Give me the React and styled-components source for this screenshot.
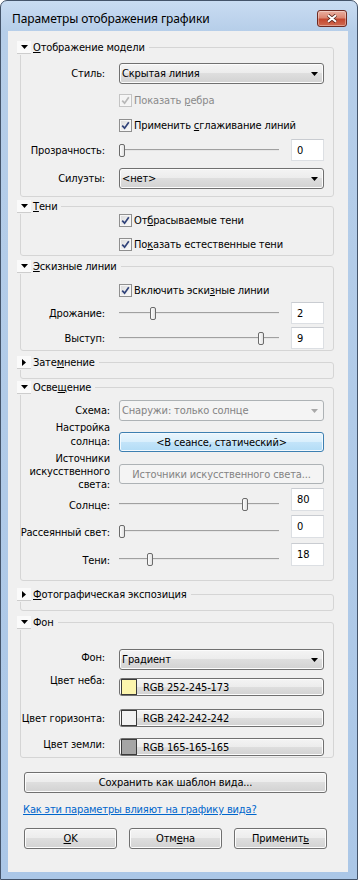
import React from 'react'
import styled, { createGlobalStyle } from 'styled-components'

const FONT = `"DejaVu Sans Condensed", "Liberation Sans", Arial, sans-serif`

const GlobalStyle = createGlobalStyle`
  * { box-sizing: border-box; }
  html, body { margin: 0; padding: 0; background: #ffffff; }
  body { font-family: ${FONT}; font-size: 11px; letter-spacing: -0.15px; color: #000; }
`

const Window = styled.div`
  width: 358px;
  height: 880px;
  display: flex;
  flex-direction: column;
  border: 1px solid #44546a;
  border-radius: 7px 7px 0 0;
  background: linear-gradient(180deg, #c9dcf2 0, #b6cee9 30px, #abc7e7 100%);
  overflow: hidden;
`

const TitleBar = styled.div`
  height: 30px;
  flex: none;
  display: flex;
  align-items: flex-start;
  justify-content: space-between;
  padding: 0 10px 0 11px;
`

const TitleText = styled.div`
  margin-top: 10px;
  font-family: "Noto Sans", "Open Sans", sans-serif;
  font-size: 12px;
  letter-spacing: -0.1px;
  line-height: 16px;
`

const CloseButton = styled.div`
  margin-top: 9px;
  width: 30px;
  height: 17px;
  border: 1px solid #6f2a22;
  border-radius: 3px;
  background: linear-gradient(180deg, #eab0a2 0%, #dc8672 45%, #c4472f 55%, #cf6b52 100%);
  box-shadow: inset 0 0 0 1px rgba(255, 255, 255, 0.35);
  display: flex;
  align-items: center;
  justify-content: center;
`

const Client = styled.div`
  flex: 1;
  margin: 0 9px 7px 7px;
  background: #f0f0f0;
  padding: 9px 14px 0 12px;
  display: flex;
  flex-direction: column;
`

const Group = styled.fieldset`
  margin: ${p => p.$mt || 0}px 0 0;
  padding: 0 9px ${p => p.$pb || 0}px 0;
  border: 1px solid #d5d5d5;
  border-radius: 3px;
  min-width: 0;
  min-inline-size: 0;
  display: flex;
  flex-direction: column;
`

const Legend = styled.legend`
  margin-left: -4px;
  padding: 0 4px 0 0;
  height: 15px;
  line-height: 15px;
  display: flex;
  align-items: center;
  gap: 2px;
`

const Expander = styled.span`
  width: 14px;
  height: 13px;
  background: #fafafa;
  border-bottom: 1px solid #cdcdcd;
  display: flex;
  align-items: center;
  justify-content: center;
`

const Key = styled.span`
  text-decoration: underline;
`

const Row = styled.div`
  display: grid;
  grid-template-columns: ${p => p.$labelW || 84}px 1fr;
  column-gap: ${p => p.$gap || 14}px;
  align-items: ${p => p.$align || 'center'};
  margin-top: ${p => p.$mt || 0}px;
  ${p => (p.$h ? `height: ${p.$h}px;` : '')}
`

const Label = styled.div`
  display: flex;
  justify-content: flex-end;
  text-align: right;
  white-space: nowrap;
  line-height: ${p => p.$lh || 13}px;
  margin-top: ${p => p.$mt || 0}px;
  margin-bottom: ${p => p.$mb || 0}px;
`

const ComboBox = styled.div`
  height: 21px;
  display: flex;
  align-items: center;
  justify-content: space-between;
  padding: 0 5px 0 2px;
  border: 1px solid ${p => (p.$disabled ? '#adb2b5' : '#707070')};
  border-radius: 3px;
  background: ${p =>
    p.$disabled
      ? '#f4f4f4'
      : 'linear-gradient(180deg, #f4f4f4 0%, #ececec 49%, #dedede 50%, #d2d2d2 100%)'};
  box-shadow: inset 0 0 0 1px ${p => (p.$disabled ? '#f4f4f4' : '#fcfcfc')};
  color: ${p => (p.$disabled ? '#838383' : '#000')};
`

const CheckLine = styled.div`
  display: flex;
  align-items: center;
  gap: 2px;
  height: 13px;
  line-height: 13px;
  color: ${p => (p.$disabled ? '#8a8a8a' : '#000')};
`

const Box = styled.span`
  width: 13px;
  height: 13px;
  flex: none;
  border: 1px solid ${p => (p.$disabled ? '#c4c4c4' : '#8f8f8f')};
  background: ${p => (p.$disabled ? '#f4f4f4' : 'linear-gradient(135deg, #dadada, #fdfdfd)')};
  box-shadow: inset 0 0 0 1px #f6f6f6;
  display: flex;
  align-items: center;
  justify-content: center;
`

const SliderField = styled.div`
  display: flex;
  align-items: ${p => p.$align || 'center'};
  gap: 12px;
`

const Track = styled.div`
  position: relative;
  width: 160px;
  height: 13px;
  flex: none;

  &::before {
    content: '';
    position: absolute;
    left: 0;
    right: 0;
    top: 5px;
    height: 1px;
    background: #a0a0a0;
    border-bottom: 1px solid #e6e6e6;
    box-sizing: content-box;
  }
`

const Thumb = styled.span`
  position: absolute;
  top: 0;
  width: 6px;
  height: 13px;
  border: 1px solid #6b6b6b;
  border-radius: 2px;
  background: linear-gradient(90deg, #fdfdfd, #e2e2e2);
`

const TextBox = styled.div`
  width: 33px;
  height: ${p => p.$h || 22}px;
  flex: none;
  border: 1px solid #dcdfe3;
  border-top-color: #c9ccd1;
  background: #fff;
  padding-left: 5px;
  display: flex;
  align-items: center;
  line-height: 13px;
`

const PushButton = styled.div`
  height: ${p => p.$h || 21}px;
  width: ${p => (p.$w ? `${p.$w}px` : 'auto')};
  flex: none;
  display: flex;
  align-items: center;
  justify-content: ${p => (p.$left ? 'flex-start' : 'center')};
  gap: ${p => (p.$left ? 6 : 0)}px;
  padding-left: ${p => (p.$left ? 1 : 0)}px;
  margin-top: ${p => p.$mt || 0}px;
  margin-left: ${p => p.$ml || 0}px;
  border: 1px solid #707070;
  border-radius: 3px;
  background: linear-gradient(180deg, #f4f4f4 0%, #ececec 49%, #dedede 50%, #d2d2d2 100%);
  box-shadow: inset 0 0 0 1px #fcfcfc;
  white-space: nowrap;

  ${p =>
    p.$variant === 'hot' &&
    `
    border-color: #3c7fb1;
    background: linear-gradient(180deg, #e9f5fd 0%, #d9effc 49%, #c3e4f9 50%, #b2dcf6 100%);
    box-shadow: inset 0 0 0 1px #f2f9fe;
  `}

  ${p =>
    p.$variant === 'disabled' &&
    `
    border-color: #adb2b5;
    background: #f4f4f4;
    box-shadow: none;
    color: #838383;
  `}
`

const Swatch = styled.span`
  width: 16px;
  height: 16px;
  flex: none;
  border: 1px solid #3a3a3a;
  background: ${p => p.$color};
`

const HelpLink = styled.div`
  margin: 10px 0 0 3px;
  line-height: 14px;
  color: #0066cc;
  text-decoration: underline;
`

const Footer = styled.div`
  display: flex;
  gap: 12px;
  margin-top: 11px;
  padding-left: 4px;
`

const DownArrow = ({ color = '#000' }) => (
  <svg width="7" height="4" viewBox="0 0 7 4">
    <polygon points="0,0 7,0 3.5,4" fill={color} />
  </svg>
)

const RightArrow = () => (
  <svg width="4" height="7" viewBox="0 0 4 7">
    <polygon points="0,0 4,3.5 0,7" fill="#000" />
  </svg>
)

const CheckMark = ({ disabled }) => (
  <svg width="9" height="9" viewBox="0 0 9 9">
    <polyline
      points="1.2,4.6 3.6,7.2 7.8,1.3"
      fill="none"
      stroke={disabled ? '#b8b8b8' : '#31437a'}
      strokeWidth="1.7"
    />
  </svg>
)

const GroupHeader = ({ open, children }) => (
  <Legend>
    <Expander>{open ? <DownArrow /> : <RightArrow />}</Expander>
    <span>{children}</span>
  </Legend>
)

const Combo = ({ value, disabled }) => (
  <ComboBox $disabled={disabled}>
    <span>{value}</span>
    <DownArrow color={disabled ? '#a8a8a8' : '#000'} />
  </ComboBox>
)

const Check = ({ disabled, children }) => (
  <CheckLine $disabled={disabled}>
    <Box $disabled={disabled}>
      <CheckMark disabled={disabled} />
    </Box>
    <span>{children}</span>
  </CheckLine>
)

const Slider = ({ value, max, align, h }) => (
  <SliderField $align={align}>
    <Track>
      <Thumb style={{ left: `${(value / max) * 154}px` }} />
    </Track>
    <TextBox $h={h}>{value}</TextBox>
  </SliderField>
)

const ColorButton = ({ color, rgb }) => (
  <PushButton $left $h={18}>
    <Swatch $color={color} />
    <span>RGB {rgb}</span>
  </PushButton>
)

export default function App() {
  return (
    <>
      <GlobalStyle />
      <Window>
        <TitleBar>
          <TitleText>Параметры отображения графики</TitleText>
          <CloseButton>
            <svg width="12" height="9" viewBox="0 0 12 9">
              <path d="M2 1.2 L10 7.8 M10 1.2 L2 7.8" stroke="#5b2820" strokeWidth="3.6" />
              <path d="M2 1.2 L10 7.8 M10 1.2 L2 7.8" stroke="#ffffff" strokeWidth="2" />
            </svg>
          </CloseButton>
        </TitleBar>

        <Client>
          <Group $pb={7}>
            <GroupHeader open>
              <Key>О</Key>тображение модели
            </GroupHeader>
            <Row $mt={8}>
              <Label>Стиль:</Label>
              <Combo value="Скрытая линия" />
            </Row>
            <Row $mt={10}>
              <span />
              <Check disabled>
                Показать <Key>р</Key>ебра
              </Check>
            </Row>
            <Row $mt={12}>
              <span />
              <Check>
                Применить <Key>с</Key>глаживание линий
              </Check>
            </Row>
            <Row $mt={7}>
              <Label>Прозрачность:</Label>
              <Slider value={0} max={100} />
            </Row>
            <Row $mt={7}>
              <Label>Силуэты:</Label>
              <Combo value="<нет>" />
            </Row>
          </Group>

          <Group $mt={2} $pb={4}>
            <GroupHeader open>
              <Key>Т</Key>ени
            </GroupHeader>
            <Row>
              <span />
              <Check>
                От<Key>б</Key>расываемые тени
              </Check>
            </Row>
            <Row $mt={11}>
              <span />
              <Check>
                По<Key>к</Key>азать естественные тени
              </Check>
            </Row>
          </Group>

          <Group $mt={3} $pb={1}>
            <GroupHeader open>
              <Key>Э</Key>скизные линии
            </GroupHeader>
            <Row $mt={10}>
              <span />
              <Check>
                Включить эски<Key>з</Key>ные линии
              </Check>
            </Row>
            <Row $mt={5}>
              <Label>Дрожание:</Label>
              <Slider value={2} max={10} />
            </Row>
            <Row $mt={3}>
              <Label>Выступ:</Label>
              <Slider value={9} max={10} />
            </Row>
          </Group>

          <Group $mt={4} $pb={8}>
            <GroupHeader>
              Зате<Key>м</Key>нение
            </GroupHeader>
          </Group>

          <Group $mt={1} $pb={14}>
            <GroupHeader open>
              Осве<Key>щ</Key>ение
            </GroupHeader>
            <Row $mt={5} $labelW={89} $gap={9}>
              <Label>Схема:</Label>
              <Combo value="Снаружи: только солнце" disabled />
            </Row>
            <Row $labelW={89} $gap={9} $align="start" $h={31}>
              <Label $lh={14}>
                Настройка
                <br />
                солнца:
              </Label>
              <PushButton $variant="hot" $h={20} $mt={11}>
                &lt;В сеансе, статический&gt;
              </PushButton>
            </Row>
            <Row $labelW={89} $gap={9} $align="start" $h={36}>
              <Label>
                Источники
                <br />
                искусственного
                <br />
                света:
              </Label>
              <PushButton $variant="disabled" $h={20} $mt={12}>
                Источники искусственного света...
              </PushButton>
            </Row>
            <Row $labelW={89} $gap={9} $align="end">
              <Label $mb={-1}>Солнце:</Label>
              <Slider value={80} max={100} align="flex-end" h={23} />
            </Row>
            <Row $mt={4} $labelW={89} $gap={9} $align="end">
              <Label $mb={-1}>Рассеянный свет:</Label>
              <Slider value={0} max={100} align="flex-end" h={23} />
            </Row>
            <Row $mt={5} $labelW={89} $gap={9} $align="end">
              <Label $mb={-1}>Тени:</Label>
              <Slider value={18} max={100} align="flex-end" h={23} />
            </Row>
          </Group>

          <Group $mt={6} $pb={8}>
            <GroupHeader>
              <Key>Ф</Key>отографическая экспозиция
            </GroupHeader>
          </Group>

          <Group $mt={4} $pb={1}>
            <GroupHeader open>Фон</GroupHeader>
            <Row $mt={19} $align="start">
              <Label $mt={2}>Фон:</Label>
              <Combo value="Градиент" />
            </Row>
            <Row $mt={8} $align="start">
              <Label $mt={-4}>Цвет неба:</Label>
              <ColorButton color="#fcf5ad" rgb="252-245-173" />
            </Row>
            <Row $mt={13} $align="start">
              <Label $mt={3}>Цвет горизонта:</Label>
              <ColorButton color="#f2f2f2" rgb="242-242-242" />
            </Row>
            <Row $mt={11} $align="start">
              <Label>Цвет земли:</Label>
              <ColorButton color="#a5a5a5" rgb="165-165-165" />
            </Row>
          </Group>

          <PushButton $mt={14} $ml={4} $w={303}>
            Сохранить как шаблон вида...
          </PushButton>

          <HelpLink>Как эти параметры влияют на графику вида?</HelpLink>

          <Footer>
            <PushButton $w={93}>
              <span>
                <Key>O</Key>K
              </span>
            </PushButton>
            <PushButton $w={93}>
              <span>
                Отм<Key>е</Key>на
              </span>
            </PushButton>
            <PushButton $w={93}>
              <span>
                Применит<Key>ь</Key>
              </span>
            </PushButton>
          </Footer>
        </Client>
      </Window>
    </>
  )
}
